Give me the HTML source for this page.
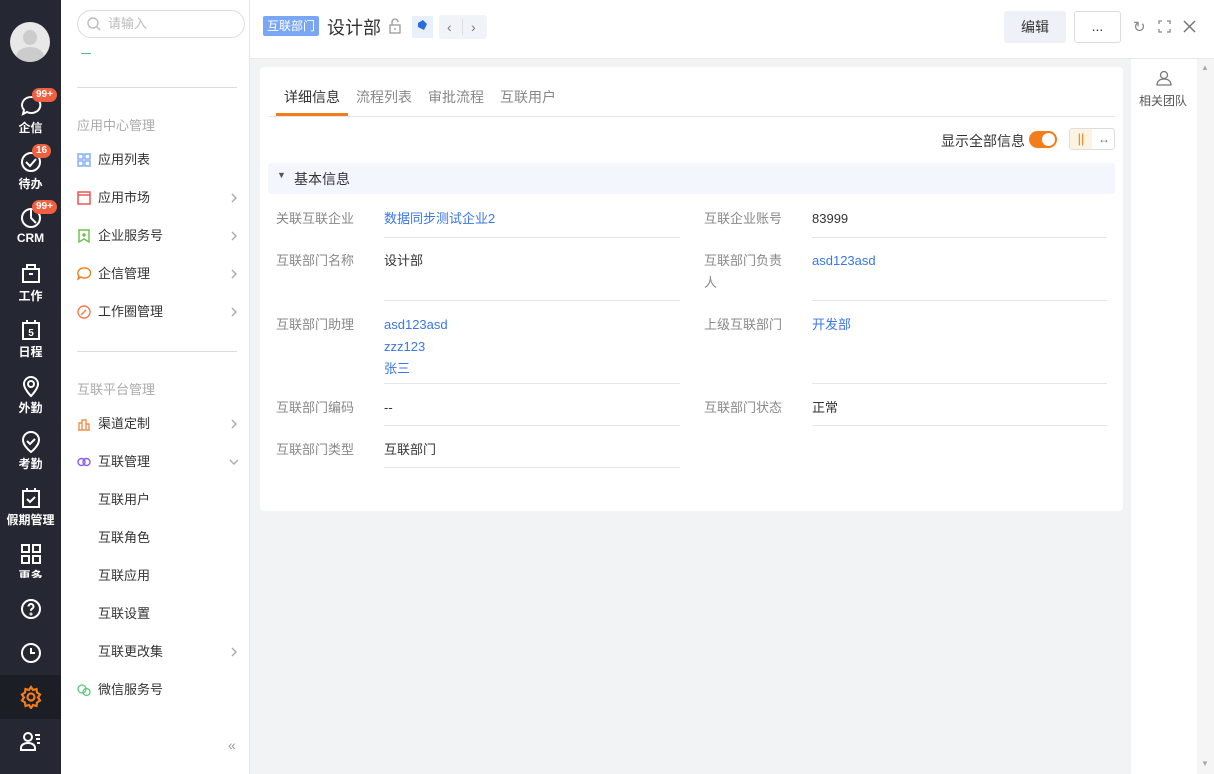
<!DOCTYPE html>
<html><head><meta charset="utf-8"><style>
*{box-sizing:border-box;margin:0;padding:0}
body{width:1214px;height:774px;overflow:hidden;font-family:"Liberation Sans","Noto Sans CJK SC",sans-serif;font-size:13px;color:#333;position:relative;background:#f2f3f5}
.abs{position:absolute}
#nav{left:0;top:0;width:61px;height:774px;background:#252833;color:#fff}
.ni{position:absolute;left:0;width:61px;text-align:center;font-size:12px;font-weight:bold}
.ni svg{display:block;margin:0 auto 1px}
.badge{position:absolute;left:32px;background:#f06040;color:#fff;font-size:10px;font-weight:bold;border-radius:8px;padding:0 4px;line-height:14px}
#menu{left:61px;top:0;width:189px;height:774px;background:#fff;border-right:1px solid #e5e5e5}
.mi{position:absolute;left:16px;width:161px;font-size:13px;color:#333;height:20px;line-height:20px}
.mi .ic{position:absolute;left:0;top:3px;width:14px;height:14px}
.mi span{position:absolute;left:21px}
.mi .ar{position:absolute;right:0;left:auto;top:4px;width:8px;height:12px}
.sec{position:absolute;left:16px;color:#aaa;font-size:13px}
.hr{position:absolute;left:16px;width:160px;height:1px;background:#ddd}
#hdr{left:250px;top:0;width:964px;height:59px;background:#fff;border-bottom:1px solid #e8e8e8}
#card{left:260px;top:67px;width:863px;height:444px;background:#fff;border-radius:4px}
#side{left:1131px;top:59px;width:66px;height:715px;background:#fff}
#sb{left:1197px;top:59px;width:17px;height:715px;background:#f5f5f5}
.lab{position:absolute;color:#888;font-size:13px;line-height:22px}
.val{position:absolute;font-size:13px;line-height:22px;color:#333}
.blue{color:#3a76e8}
.ln{position:absolute;height:1px;background:#e5e5e5}
</style></head><body>
<div id="nav" class="abs">
 <div class="abs" style="left:10px;top:22px;width:40px;height:40px;border-radius:50%;background:#e8e8e8;overflow:hidden"><div class="abs" style="left:13px;top:8px;width:14px;height:15px;border-radius:50%;background:#ccc"></div><div class="abs" style="left:6px;top:25px;width:28px;height:20px;border-radius:50% 50% 0 0;background:#ccc"></div></div>
 <div class="ni" style="top:94px"><svg width="24" height="24" viewBox="0 0 24 24" fill="none" stroke="#fff" stroke-width="2"><path d="M12 3a9 8 0 1 1-4 15l-4 2 1-4A9 8 0 0 1 12 3z"/></svg>企信</div>
 <div class="badge" style="top:88px">99+</div>
 <div class="ni" style="top:150px"><svg width="24" height="24" viewBox="0 0 24 24" fill="none" stroke="#fff" stroke-width="2"><circle cx="12" cy="12" r="9"/><path d="M7 12l4 4 6-7"/></svg>待办</div>
 <div class="badge" style="top:144px">16</div>
 <div class="ni" style="top:206px"><svg width="24" height="24" viewBox="0 0 24 24" fill="none" stroke="#fff" stroke-width="2"><circle cx="12" cy="12" r="9"/><path d="M12 3v9l5 5"/></svg>CRM</div>
 <div class="badge" style="top:200px">99+</div>
 <div class="ni" style="top:262px"><svg width="24" height="24" viewBox="0 0 24 24" fill="none" stroke="#fff" stroke-width="2"><rect x="4" y="7" width="16" height="13"/><path d="M8 7V3h8v4M10 12h4"/></svg>工作</div>
 <div class="ni" style="top:318px"><svg width="24" height="24" viewBox="0 0 24 24" fill="none" stroke="#fff" stroke-width="2"><rect x="4" y="5" width="16" height="16"/><path d="M8 2v4M16 2v4"/><text x="12" y="18" font-size="10" fill="#fff" stroke="none" text-anchor="middle" font-weight="bold">5</text></svg>日程</div>
 <div class="ni" style="top:374px"><svg width="24" height="24" viewBox="0 0 24 24" fill="none" stroke="#fff" stroke-width="2"><path d="M12 22s-7-7-7-12a7 7 0 0 1 14 0c0 5-7 12-7 12z"/><circle cx="12" cy="10" r="3"/></svg>外勤</div>
 <div class="ni" style="top:430px"><svg width="24" height="24" viewBox="0 0 24 24" fill="none" stroke="#fff" stroke-width="2"><path d="M12 22s-8-6-8-12a8 8 0 0 1 16 0c0 6-8 12-8 12z"/><path d="M8 11l3 3 5-5"/></svg>考勤</div>
 <div class="ni" style="top:486px"><svg width="24" height="24" viewBox="0 0 24 24" fill="none" stroke="#fff" stroke-width="2"><rect x="4" y="5" width="16" height="16"/><path d="M8 2v4M16 2v4M8 13l3 3 5-5"/></svg>假期管理</div>
 <div class="ni" style="top:542px;height:36px;overflow:hidden"><svg width="24" height="24" viewBox="0 0 24 24" fill="none" stroke="#fff" stroke-width="2"><rect x="3" y="3" width="7" height="7"/><rect x="14" y="3" width="7" height="7"/><rect x="3" y="14" width="7" height="7"/><rect x="14" y="14" width="7" height="7"/></svg>更多</div>
 <div class="ni" style="top:597px"><svg width="24" height="24" viewBox="0 0 24 24" fill="none" stroke="#fff" stroke-width="2"><circle cx="12" cy="12" r="9"/><path d="M9.5 9.5a2.5 2.5 0 1 1 3.5 2.3c-.8.4-1 1-1 2"/><circle cx="12" cy="17" r=".5"/></svg></div>
 <div class="ni" style="top:641px"><svg width="24" height="24" viewBox="0 0 24 24" fill="none" stroke="#fff" stroke-width="2"><circle cx="12" cy="12" r="9"/><path d="M12 7v5h4"/></svg></div>
 <div class="abs" style="left:0;top:675px;width:61px;height:44px;background:#1c1e26"></div>
 <div class="ni" style="top:685px"><svg width="24" height="24" viewBox="0 0 24 24" fill="none" stroke="#f27d1a" stroke-width="2.2"><circle cx="12" cy="12" r="3.5"/><path d="M12 2l2 3 3.5-1 .5 3.5 3 2-2 3 2 3-3 2-.5 3.5-3.5-1-2 3-2-3-3.5 1-.5-3.5-3-2 2-3-2-3 3-2 .5-3.5 3.5 1z"/></svg></div>
 <div class="ni" style="top:729px"><svg width="24" height="24" viewBox="0 0 24 24" fill="none" stroke="#fff" stroke-width="2"><circle cx="9" cy="8" r="4"/><path d="M2 21v-2c0-3 3-5 7-5s7 2 7 5v2zM16 6h5M17 10h4M18 14h3"/></svg></div>
</div>
<div id="menu" class="abs">
 <div class="abs" style="left:16px;top:10px;width:168px;height:28px;border:1px solid #ddd;border-radius:14px;color:#bbb;line-height:26px;padding-left:30px">请输入
  <svg class="abs" style="left:9px;top:6px" width="14" height="14" viewBox="0 0 14 14" fill="none" stroke="#bbb" stroke-width="1.4"><circle cx="6" cy="6" r="5"/><path d="M10 10l3 3"/></svg></div>
 <div class="abs" style="left:20px;top:53px;width:10px;height:1px;background:#4bc08a"></div>
 <div class="hr" style="top:87px"></div>
 <div class="sec" style="top:115px">应用中心管理</div>
 <div class="mi" style="top:150px"><svg class="ic" viewBox="0 0 14 14" fill="none" stroke="#7aa7f5" stroke-width="1.4"><rect x="1" y="1" width="5" height="5"/><rect x="8" y="1" width="5" height="5"/><rect x="1" y="8" width="5" height="5"/><rect x="8" y="8" width="5" height="5"/></svg><span>应用列表</span></div>
 <div class="mi" style="top:188px"><svg class="ic" viewBox="0 0 14 14" fill="none" stroke="#f04848" stroke-width="1.4"><rect x="1" y="1" width="12" height="12"/><path d="M1 4h12"/></svg><span>应用市场</span><svg class="ar" viewBox="0 0 8 12" fill="none" stroke="#aaa" stroke-width="1.4"><path d="M2 2l4 4-4 4"/></svg></div>
 <div class="mi" style="top:226px"><svg class="ic" viewBox="0 0 14 14" fill="none" stroke="#6cc04a" stroke-width="1.4"><path d="M2 1h10v12l-5-3-5 3z"/><circle cx="7" cy="6" r="1" fill="#6cc04a"/></svg><span>企业服务号</span><svg class="ar" viewBox="0 0 8 12" fill="none" stroke="#aaa" stroke-width="1.4"><path d="M2 2l4 4-4 4"/></svg></div>
 <div class="mi" style="top:264px"><svg class="ic" viewBox="0 0 14 14" fill="none" stroke="#f27d1a" stroke-width="1.4"><path d="M7 1a6 5 0 1 1-3 9l-3 2 1-3A6 5 0 0 1 7 1z"/></svg><span>企信管理</span><svg class="ar" viewBox="0 0 8 12" fill="none" stroke="#aaa" stroke-width="1.4"><path d="M2 2l4 4-4 4"/></svg></div>
 <div class="mi" style="top:302px"><svg class="ic" viewBox="0 0 14 14" fill="none" stroke="#f27d50" stroke-width="1.4"><circle cx="7" cy="7" r="6"/><path d="M4 10l5-5"/></svg><span>工作圈管理</span><svg class="ar" viewBox="0 0 8 12" fill="none" stroke="#aaa" stroke-width="1.4"><path d="M2 2l4 4-4 4"/></svg></div>
 <div class="hr" style="top:351px"></div>
 <div class="sec" style="top:379px">互联平台管理</div>
 <div class="mi" style="top:414px"><svg class="ic" viewBox="0 0 14 14" fill="none" stroke="#f2904a" stroke-width="1.4"><path d="M1 13h12M2 13V6h3v7M5 13V3h4v10M9 13V7h3v6"/></svg><span>渠道定制</span><svg class="ar" viewBox="0 0 8 12" fill="none" stroke="#aaa" stroke-width="1.4"><path d="M2 2l4 4-4 4"/></svg></div>
 <div class="mi" style="top:452px"><svg class="ic" viewBox="0 0 14 14" fill="none" stroke="#8a5cf0" stroke-width="1.4"><circle cx="4.5" cy="7" r="3.5"/><circle cx="9.5" cy="7" r="3.5"/></svg><span>互联管理</span><svg class="ar" style="width:10px;right:-1px" viewBox="0 0 10 12" fill="none" stroke="#aaa" stroke-width="1.4"><path d="M1 4l4 4 4-4"/></svg></div>
 <div class="mi" style="top:490px"><span>互联用户</span></div>
 <div class="mi" style="top:528px"><span>互联角色</span></div>
 <div class="mi" style="top:566px"><span>互联应用</span></div>
 <div class="mi" style="top:604px"><span>互联设置</span></div>
 <div class="mi" style="top:642px"><span>互联更改集</span><svg class="ar" viewBox="0 0 8 12" fill="none" stroke="#aaa" stroke-width="1.4"><path d="M2 2l4 4-4 4"/></svg></div>
 <div class="mi" style="top:680px"><svg class="ic" viewBox="0 0 14 14" fill="none" stroke="#5ac87a" stroke-width="1.3"><circle cx="5" cy="6" r="4"/><circle cx="9.5" cy="9" r="3.5"/></svg><span>微信服务号</span></div>
 <div class="abs" style="left:167px;top:737px;color:#999;font-size:14px">«</div>
</div>
<div id="hdr" class="abs">
 <div class="abs" style="left:13px;top:16px;width:56px;height:20px;background:#7aa7f5;color:#fff;font-size:12px;line-height:20px;text-align:center;border-radius:2px">互联部门</div>
 <div class="abs" style="left:77px;top:14px;font-size:18px;color:#333">设计部</div>
 <svg class="abs" style="left:138px;top:18px" width="14" height="16" viewBox="0 0 14 16" fill="none" stroke="#999" stroke-width="1.3"><rect x="2" y="7" width="10" height="8"/><path d="M4 7V4a3 3 0 0 1 6 0"/><path d="M7 10v2"/></svg>
 <div class="abs" style="left:162px;top:16px;width:21px;height:22px;background:#e8f0fc"><svg width="21" height="22" viewBox="0 0 21 22"><path d="M6 7l5-3 4 4-3 6-6-3z" fill="#2a6ae0"/></svg></div>
 <div class="abs" style="left:189px;top:15px;width:48px;height:24px;background:#f0f3f8;border-radius:3px;color:#777;font-size:14px;line-height:24px"><span class="abs" style="left:8px">‹</span><span class="abs" style="left:23px;top:4px;width:1px;height:16px;background:#ddd"></span><span class="abs" style="left:32px">›</span></div>
 <div class="abs" style="left:754px;top:11px;width:62px;height:32px;background:#eef1f7;border-radius:3px;text-align:center;line-height:32px;font-size:14px">编辑</div>
 <div class="abs" style="left:824px;top:11px;width:47px;height:32px;border:1px solid #ddd;border-radius:3px;text-align:center;line-height:28px;font-size:14px">...</div>
 <div class="abs" style="left:883px;top:18px;color:#888;font-size:15px">↻</div>
 <svg class="abs" style="left:908px;top:20px" width="13" height="13" viewBox="0 0 13 13" fill="none" stroke="#888" stroke-width="1.3"><path d="M1 4V1h3M9 1h3v3M12 9v3H9M4 12H1V9"/></svg>
 <svg class="abs" style="left:933px;top:20px" width="13" height="13" viewBox="0 0 13 13" stroke="#777" stroke-width="1.5"><path d="M1 1l11 11M12 1L1 12"/></svg>
</div>
<div id="card" class="abs">
 <div class="abs" style="left:24px;top:20px;color:#333;font-size:14px">详细信息</div>
 <div class="abs" style="left:96px;top:20px;color:#888;font-size:14px">流程列表</div>
 <div class="abs" style="left:168px;top:20px;color:#888;font-size:14px">审批流程</div>
 <div class="abs" style="left:240px;top:20px;color:#888;font-size:14px">互联用户</div>
 <div class="abs" style="left:9px;top:49px;width:846px;height:1px;background:#e5e5e5"></div>
 <div class="abs" style="left:16px;top:46px;width:72px;height:3px;background:#f27d1a"></div>
 <div class="abs" style="left:681px;top:64px;font-size:14px;color:#333">显示全部信息</div>
 <div class="abs" style="left:769px;top:64px;width:28px;height:17px;border-radius:9px;background:#f27d1a"><div class="abs" style="left:13px;top:2px;width:13px;height:13px;border-radius:50%;background:#fff"></div></div>
 <div class="abs" style="left:809px;top:61px;width:46px;height:22px;border:1px solid #ddd;border-radius:3px;overflow:hidden"><div class="abs" style="left:0;top:0;width:22px;height:20px;background:#fdf3e3;color:#f27d1a;text-align:center;line-height:20px;font-size:13px">||</div><div class="abs" style="left:24px;top:0;width:20px;text-align:center;line-height:20px;color:#777;font-size:12px">↔</div></div>
 <div class="abs" style="left:8px;top:96px;width:847px;height:31px;background:#f3f6fc;border-radius:3px"><span class="abs" style="left:9px;top:7px;font-size:9px;color:#555">▼</span><span class="abs" style="left:26px;top:6px;font-size:14px">基本信息</span></div>
 <div class="lab" style="left:16px;top:141px">关联互联企业</div><div class="val blue" style="left:124px;top:141px">数据同步测试企业2</div>
 <div class="lab" style="left:444px;top:141px">互联企业账号</div><div class="val" style="left:552px;top:141px">83999</div>
 <div class="ln" style="left:124px;top:170px;width:296px"></div><div class="ln" style="left:552px;top:170px;width:295px"></div>
 <div class="lab" style="left:16px;top:183px">互联部门名称</div><div class="val" style="left:124px;top:183px">设计部</div>
 <div class="lab" style="left:444px;top:183px;width:90px">互联部门负责人</div><div class="val blue" style="left:552px;top:183px">asd123asd</div>
 <div class="ln" style="left:124px;top:233px;width:296px"></div><div class="ln" style="left:552px;top:233px;width:295px"></div>
 <div class="lab" style="left:16px;top:247px">互联部门助理</div><div class="val blue" style="left:124px;top:247px">asd123asd<br>zzz123<br>张三</div>
 <div class="lab" style="left:444px;top:247px">上级互联部门</div><div class="val blue" style="left:552px;top:247px">开发部</div>
 <div class="ln" style="left:124px;top:316px;width:296px"></div><div class="ln" style="left:552px;top:316px;width:295px"></div>
 <div class="lab" style="left:16px;top:330px">互联部门编码</div><div class="val" style="left:124px;top:330px">--</div>
 <div class="lab" style="left:444px;top:330px">互联部门状态</div><div class="val" style="left:552px;top:330px">正常</div>
 <div class="ln" style="left:124px;top:358px;width:296px"></div><div class="ln" style="left:552px;top:358px;width:295px"></div>
 <div class="lab" style="left:16px;top:372px">互联部门类型</div><div class="val" style="left:124px;top:372px">互联部门</div>
 <div class="ln" style="left:124px;top:400px;width:296px"></div>
</div>
<div id="side" class="abs">
 <svg class="abs" style="left:24px;top:10px" width="18" height="18" viewBox="0 0 18 18" fill="none" stroke="#777" stroke-width="1.3"><circle cx="9" cy="6" r="3.5"/><path d="M2 16c0-4 3-6 7-6s7 2 7 6z"/></svg>
 <div class="abs" style="left:8px;top:33px;font-size:12px;color:#555">相关团队</div>
</div>
<div id="sb" class="abs"><div class="abs" style="left:4px;top:4px;color:#aaa;font-size:8px">▲</div><div class="abs" style="left:4px;top:700px;color:#aaa;font-size:8px">▼</div></div>
</body></html>
